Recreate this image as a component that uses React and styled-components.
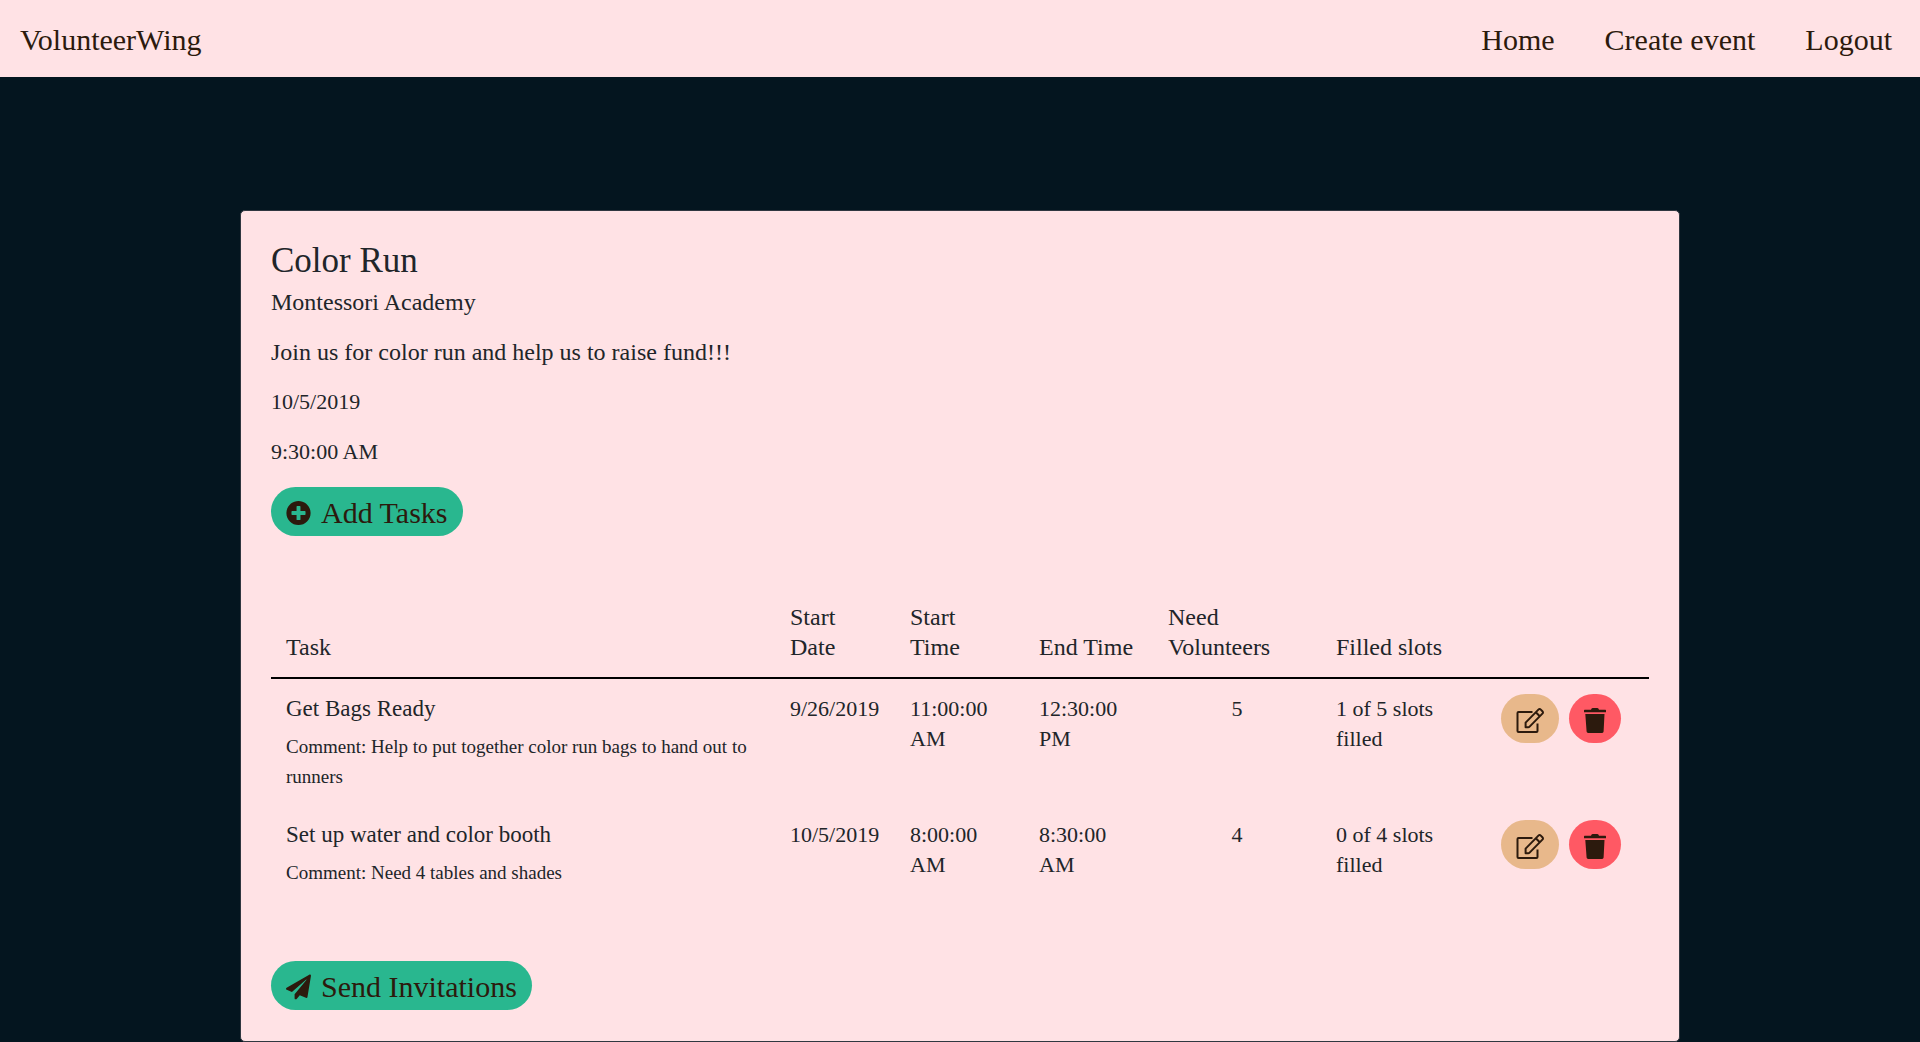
import React from "react";
import styled, { createGlobalStyle } from "styled-components";
import { FaPlusCircle, FaPaperPlane } from "react-icons/fa";

const color = {
  night: "#04151f",
  blush: "#ffe2e5",
  bark: "#2c1a0d",
  ink: "#212529",
  green: "#29b78f",
  sand: "#e8b88b",
  coral: "#ff5964",
};

const GlobalStyle = createGlobalStyle`
  *, *::before, *::after { box-sizing: border-box; }
  body {
    margin: 0;
    background: ${color.night};
    color: ${color.ink};
    font-family: "Liberation Serif", "Times New Roman", serif;
    font-size: 22px;
    line-height: 30px;
  }
`;

const NavBar = styled.nav`
  display: flex;
  align-items: center;
  justify-content: space-between;
  min-height: 77px;
  padding: 2px 28px 0 20px;
  background: ${color.blush};
`;

const NavLink = styled.a`
  color: ${color.bark};
  font-size: 30px;
  line-height: 40px;
  text-decoration: none;
`;

const NavLinks = styled.div`
  display: flex;
  gap: 50px;
`;

const Card = styled.main`
  width: 75%;
  margin: 133px auto 0;
  padding: 30px 30px 31px;
  background: ${color.blush};
  border: 1px solid #2f3740;
  border-radius: 5px;
`;

const Title = styled.h1`
  margin: 0 0 6px;
  font-size: 35px;
  font-weight: 400;
  line-height: 40px;
`;

const Detail = styled.p`
  margin: 0 0 20px;
  font-size: ${(p) => (p.$numeric ? "22px" : "24px")};
`;

const Button = styled.button`
  display: inline-flex;
  align-items: center;
  gap: 10px;
  height: 49px;
  padding: 2px 15px 0;
  border: 0;
  border-radius: 25px;
  background: ${(p) => p.$fill};
  color: ${color.bark};
  font-family: inherit;
  font-size: 30px;
  line-height: 40px;
  cursor: pointer;

  svg {
    flex: none;
    width: ${(p) => p.$iconWidth || "25px"};
    height: 26px;
  }
`;

const TaskTable = styled.table`
  width: 100%;
  margin: 51px 0 60px;
  border-collapse: separate;
  border-spacing: 0;
  table-layout: fixed;
  white-space: pre-line;
`;

const Column = styled.col`
  width: ${(p) => p.$width};
`;

const HeadCell = styled.th`
  padding: 15px;
  border-bottom: 2px solid #000;
  font-size: 24px;
  font-weight: 400;
  text-align: left;
  vertical-align: bottom;
`;

const Cell = styled.td`
  padding: 15px 15px 13px;
  text-align: ${(p) => p.$align || "left"};
  vertical-align: top;
`;

const TaskName = styled.div`
  font-size: 23px;
`;

const Comment = styled.div`
  margin-top: 8px;
  font-size: 19px;
`;

const Actions = styled.div`
  display: flex;
  gap: 10px;
`;

const details = [
  { text: "Montessori Academy" },
  { text: "Join us for color run and help us to raise fund!!!" },
  { text: "10/5/2019", numeric: true },
  { text: "9:30:00 AM", numeric: true },
];

const columns = [
  { label: "Task", width: "auto" },
  { label: "Start\nDate", width: "120px" },
  { label: "Start\nTime", width: "129px" },
  { label: "End Time", width: "129px" },
  { label: "Need\nVolunteers", width: "168px" },
  { label: "Filled slots", width: "165px" },
  { label: "", width: "163px" },
];

const tasks = [
  {
    name: "Get Bags Ready",
    comment: "Help to put together color run bags to hand out to runners",
    date: "9/26/2019",
    start: "11:00:00\nAM",
    end: "12:30:00\nPM",
    need: 5,
    filled: 1,
  },
  {
    name: "Set up water and color booth",
    comment: "Need 4 tables and shades",
    date: "10/5/2019",
    start: "8:00:00\nAM",
    end: "8:30:00\nAM",
    need: 4,
    filled: 0,
  },
];

function EditIcon() {
  return (
    <svg
      viewBox="0 0 28 26"
      fill="none"
      stroke="currentColor"
      strokeWidth="2"
      strokeLinejoin="round"
      aria-hidden="true"
    >
      <path d="M16.5 5H2.5Q1.5 5 1.5 6V24Q1.5 25 2.5 25H20.5Q21.5 25 21.5 24V16.5" />
      <path d="M9.6 20.2V15.6L22.4 2.6Q23.6 1.4 24.8 2.6L26.4 4.2Q27.6 5.4 26.4 6.6L13.6 19.6Q13 20.2 12.2 20.2Z" />
      <path d="M19.8 5.2L23.8 9.2" />
    </svg>
  );
}

function TrashIcon() {
  return (
    <svg viewBox="0 0 22 26" fill="currentColor" aria-hidden="true">
      <path d="M0 3.4Q0 2.8.6 2.8H7L7.6 1.6Q8 1 8.7 1H13.3Q14 1 14.4 1.6L15 2.8H21.4Q22 2.8 22 3.4V5.3H0Z" />
      <path d="M1.3 7H20.5L19.6 24.6Q19.5 26 18.1 26H4.1Q2.7 26 2.6 24.6Z" />
    </svg>
  );
}

function TaskRow({ task }) {
  return (
    <tr>
      <Cell>
        <TaskName>{task.name}</TaskName>
        <Comment>{`Comment: ${task.comment}`}</Comment>
      </Cell>
      <Cell>{task.date}</Cell>
      <Cell>{task.start}</Cell>
      <Cell>{task.end}</Cell>
      <Cell $align="center">{task.need}</Cell>
      <Cell>{`${task.filled} of ${task.need} slots\nfilled`}</Cell>
      <Cell>
        <Actions>
          <Button
            type="button"
            $fill={color.sand}
            $iconWidth="28px"
            aria-label={`Edit ${task.name}`}
          >
            <EditIcon />
          </Button>
          <Button
            type="button"
            $fill={color.coral}
            $iconWidth="22px"
            aria-label={`Delete ${task.name}`}
          >
            <TrashIcon />
          </Button>
        </Actions>
      </Cell>
    </tr>
  );
}

export default function App() {
  return (
    <>
      <GlobalStyle />
      <NavBar>
        <NavLink href="#">VolunteerWing</NavLink>
        <NavLinks>
          <NavLink href="#home">Home</NavLink>
          <NavLink href="#create">Create event</NavLink>
          <NavLink href="#logout">Logout</NavLink>
        </NavLinks>
      </NavBar>
      <Card>
        <Title>Color Run</Title>
        {details.map((d) => (
          <Detail key={d.text} $numeric={d.numeric}>
            {d.text}
          </Detail>
        ))}
        <Button type="button" $fill={color.green}>
          <FaPlusCircle />
          Add Tasks
        </Button>
        <TaskTable>
          <colgroup>
            {columns.map((c, i) => (
              <Column key={i} $width={c.width} />
            ))}
          </colgroup>
          <thead>
            <tr>
              {columns.map((c, i) => (
                <HeadCell key={i}>{c.label}</HeadCell>
              ))}
            </tr>
          </thead>
          <tbody>
            {tasks.map((t) => (
              <TaskRow key={t.name} task={t} />
            ))}
          </tbody>
        </TaskTable>
        <Button type="button" $fill={color.green}>
          <FaPaperPlane />
          Send Invitations
        </Button>
      </Card>
    </>
  );
}
